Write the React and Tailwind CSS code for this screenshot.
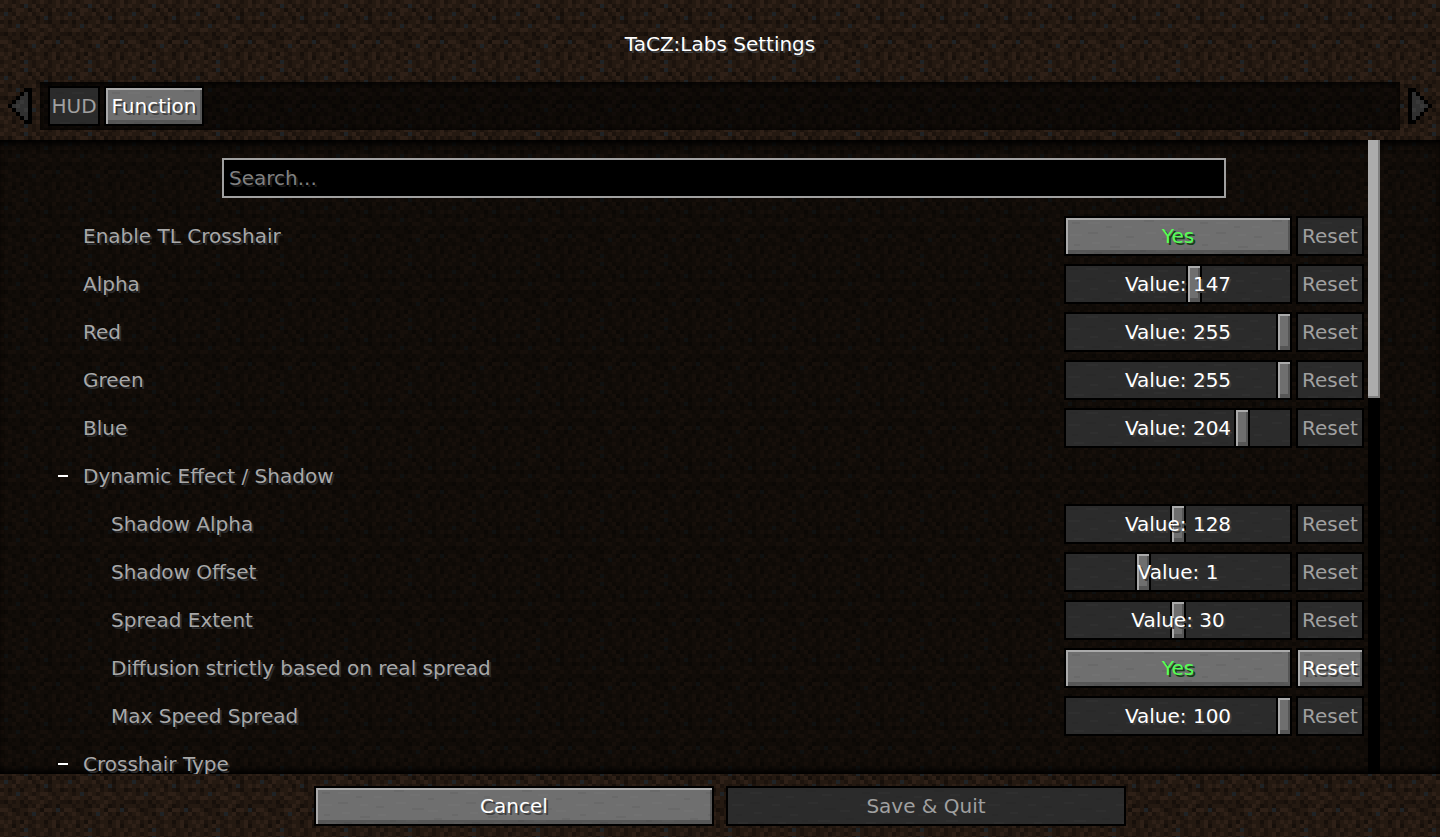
import React, { useId, useState } from "react";

const dirtRows = [
	"MLMDMLLMDMLMDMLD",
	"LMMLMDBMLDMDMMLM",
	"DMKMLLMKMLKMDLDM",
	"MBMDLMMLDMLMKMMD",
	"LMMLDMDMMKMBDMLM",
	"DMKMMKMMLDMDKMMK",
	"LMDMBMLMDMLLMDMM",
	"MMLLMMDLLMDMLMDL",
	"DKMDMKMDMMLMDMMD",
	"MMDMMDKMDLMKDMKM",
	"LLMKDMMLLMKLLMBD",
	"DMLMDMKMBMLDMKML",
	"MDMMLMMDMLMMDMMD",
	"LMLDMKLMDMMKMLDM",
	"MLMKMLMDMLMDMLKM",
	"DMMLMDBMDMMLDMMLD",
];

const dirtColors = {
	L: "#2e2017",
	D: "#1c130d",
	K: "#160f0a",
	B: "#1f2326",
};

const stoneDark = [[6, 4, 8], [40, 8, 6], [78, 2, 10], [112, 10, 6], [22, 14, 10], [60, 18, 8], [96, 20, 12], [8, 26, 6], [44, 28, 10], [118, 30, 8], [74, 32, 6], [28, 34, 8]];
const stoneLight = [[22, 4, 12], [58, 8, 8], [94, 6, 10], [4, 16, 12], [44, 16, 8], [80, 14, 10], [112, 22, 10], [26, 24, 8], [62, 26, 8], [90, 32, 12], [10, 34, 10], [50, 34, 8]];

const settings = [
	{ id: "crosshair", label: "Enable TL Crosshair", type: "toggle" },
	{ id: "alpha", label: "Alpha", type: "slider", value: 147, max: 255 },
	{ id: "red", label: "Red", type: "slider", value: 255, max: 255 },
	{ id: "green", label: "Green", type: "slider", value: 255, max: 255 },
	{ id: "blue", label: "Blue", type: "slider", value: 204, max: 255 },
	{ id: "dynamic", label: "Dynamic Effect / Shadow", type: "group" },
	{ id: "shadowAlpha", label: "Shadow Alpha", type: "slider", value: 128, max: 255, nested: true },
	{ id: "shadowOffset", label: "Shadow Offset", type: "slider", value: 1, max: 3, nested: true },
	{ id: "spread", label: "Spread Extent", type: "slider", value: 30, max: 60, nested: true },
	{ id: "diffusion", label: "Diffusion strictly based on real spread", type: "toggle", changed: true, nested: true },
	{ id: "maxSpeed", label: "Max Speed Spread", type: "slider", value: 100, max: 100, nested: true },
	{ id: "crosshairType", label: "Crosshair Type", type: "group" },
];

// Repeating 16x16 dirt block, 4px per texel
function Dirt({ offset = 0 }) {
	const id = useId();
	return (
		<svg aria-hidden="true" className="absolute inset-0 -z-10 h-full w-full" shapeRendering="crispEdges">
			<defs>
				<pattern id={id} y={offset} width="64" height="64" patternUnits="userSpaceOnUse">
					<rect width="64" height="64" fill="#241911" />
					{dirtRows.map((row, y) =>
						[...row].map((c, x) =>
							dirtColors[c] ? (
								<rect key={`${x}-${y}`} x={x * 4} y={y * 4} width="4" height="4" fill={dirtColors[c]} />
							) : null
						)
					)}
				</pattern>
			</defs>
			<rect width="100%" height="100%" fill={`url(#${id})`} />
		</svg>
	);
}

// Faint grain on the stone buttons
function Stone() {
	const id = useId();
	return (
		<svg aria-hidden="true" className="absolute inset-0 -z-10 h-full w-full" shapeRendering="crispEdges">
			<defs>
				<pattern id={id} width="128" height="40" patternUnits="userSpaceOnUse">
					{stoneDark.map(([x, y, w]) => (
						<rect key={`${x}-${y}`} x={x} y={y} width={w} height="2" fill="#000" opacity="0.05" />
					))}
					{stoneLight.map(([x, y, w]) => (
						<rect key={`${x}-${y}`} x={x} y={y} width={w} height="2" fill="#fff" opacity="0.02" />
					))}
				</pattern>
			</defs>
			<rect width="100%" height="100%" fill={`url(#${id})`} />
		</svg>
	);
}

function StoneButton({ children, disabled, className = "", ...props }) {
	const look = disabled
		? "bg-[#2b2b2b] text-[#a0a0a0]"
		: "bg-[#6f6f6f] text-white shadow-[inset_2px_2px_0_#aaaaaa,inset_-2px_-4px_0_#565656] [text-shadow:2px_2px_0_#3e3e3e]";
	return (
		<button
			type="button"
			disabled={disabled}
			className={`relative isolate flex h-10 shrink-0 items-center justify-center border-2 border-black whitespace-nowrap ${look} ${className}`}
			{...props}
		>
			<Stone />
			{children}
		</button>
	);
}

function Arrow({ flip }) {
	return (
		<button
			type="button"
			aria-label={flip ? "Next tab" : "Previous tab"}
			className="flex w-10 shrink-0 items-center justify-center"
		>
			<svg width="24" height="36" viewBox="0 0 6 9" shapeRendering="crispEdges" className={flip ? "-scale-x-100" : ""}>
				<path d="M4 0H6V9H4V8H3V7H2V6H1V5H0V4H1V3H2V2H3V1H4Z" fill="#000" />
				<path d="M4 1H5V8H4V7H3V6H2V5H1V4H2V3H3V2H4Z" fill="#303030" />
				<path d="M3 3H4V4H3ZM4 5H5V6H4ZM2 4H3V5H2Z" fill="#383838" />
			</svg>
		</button>
	);
}

function Slider({ id, max, value, onChange }) {
	return (
		<div className="relative isolate h-10 w-57 shrink-0 bg-[#2b2b2b]">
			<Stone />
			<input
				id={id}
				type="range"
				min="0"
				max={max}
				value={value}
				onChange={(e) => onChange(Number(e.target.value))}
				className="block h-10 w-full appearance-none bg-transparent shadow-[inset_0_0_0_2px_#000] [&::-webkit-slider-thumb]:h-10 [&::-webkit-slider-thumb]:w-4 [&::-webkit-slider-thumb]:appearance-none [&::-webkit-slider-thumb]:border-2 [&::-webkit-slider-thumb]:border-black [&::-webkit-slider-thumb]:bg-[#6f6f6f] [&::-webkit-slider-thumb]:shadow-[inset_2px_2px_0_#aaaaaa,inset_-2px_-4px_0_#565656]"
			/>
			<output
				htmlFor={id}
				className="pointer-events-none absolute inset-0 text-center leading-10 text-white [text-shadow:2px_2px_0_#3e3e3e]"
			>
				Value: {value}
			</output>
		</div>
	);
}

function SettingRow({ item }) {
	const [value, setValue] = useState(item.type === "toggle" ? true : item.value);

	if (item.type === "group") {
		return (
			<button type="button" aria-expanded="true" className="flex h-10 shrink-0 items-center pl-[58px] text-[#a8a8a8]">
				<span className="mr-[15px] h-[2px] w-[10px] bg-white"></span>
				<span className="[text-shadow:2px_2px_0_#2c2d2f]">{item.label}</span>
			</button>
		);
	}

	return (
		<div className={`flex h-10 shrink-0 items-center gap-1 pr-1 ${item.nested ? "pl-[111px]" : "pl-[83px]"}`}>
			<label htmlFor={item.id} className="flex-1 text-[#a8a8a8] [text-shadow:2px_2px_0_#2c2d2f]">
				{item.label}
			</label>
			{item.type === "toggle" ? (
				<StoneButton id={item.id} className="w-57" onClick={() => setValue(!value)}>
					<span className={value ? "text-[#55ff55] [text-shadow:2px_2px_0_#153f15]" : "text-[#ff5555] [text-shadow:2px_2px_0_#3f1515]"}>
						{value ? "Yes" : "No"}
					</span>
				</StoneButton>
			) : (
				<Slider id={item.id} max={item.max} value={value} onChange={setValue} />
			)}
			<StoneButton className="w-17" disabled={!item.changed}>
				Reset
			</StoneButton>
		</div>
	);
}

function App() {
	const [search, setSearch] = useState("");
	const rows = settings.filter((s) => s.label.toLowerCase().includes(search.toLowerCase()));

	return (
		<div className="relative isolate flex h-screen flex-col overflow-hidden font-['DejaVu_Sans',sans-serif] text-[20px]">
			<Dirt />

			<header className="pt-6 pb-[10px]">
				<h1 className="mb-[18px] h-10 text-center leading-10 text-white [text-shadow:2px_2px_0_#3e4042]">
					TaCZ:Labs Settings
				</h1>
				<nav className="flex h-12">
					<Arrow />
					<div className="flex flex-1 items-center gap-1 bg-black/60 px-2 shadow-[inset_0_3px_3px_rgba(0,0,0,0.5),inset_0_-2px_3px_rgba(0,0,0,0.4)]">
						<StoneButton disabled className="w-13">
							HUD
						</StoneButton>
						<StoneButton className="w-25">Function</StoneButton>
					</div>
					<Arrow flip />
				</nav>
			</header>

			<main className="relative isolate flex min-h-0 flex-1 overflow-hidden">
				<Dirt offset={-138} />
				<div className="absolute inset-0 -z-10 bg-[#010200]/55 shadow-[inset_0_7px_6px_-3px_#000,inset_0_-7px_6px_-3px_#000]"></div>
				<div className="flex min-w-0 flex-1 flex-col gap-2 pt-[18px]">
					<input
						type="text"
						aria-label="Search"
						placeholder="Search..."
						value={search}
						onChange={(e) => setSearch(e.target.value)}
						className="mr-[142px] mb-[10px] ml-[222px] h-10 shrink-0 border-2 border-[#a0a0a0] bg-black px-[5px] text-[#e0e0e0] outline-none [text-shadow:2px_2px_0_#1c1c1c] placeholder:text-[#808080]"
					/>
					{rows.map((item) => (
						<SettingRow key={item.id} item={item} />
					))}
				</div>
				<div className="mr-15 w-3 shrink-0 bg-black">
					<div className="h-[258px] bg-[#acacac] shadow-[inset_-2px_-2px_0_#808080]"></div>
				</div>
			</main>

			<footer className="flex justify-center gap-3 pt-3 pb-[11px]">
				<StoneButton className="w-100">Cancel</StoneButton>
				<StoneButton className="w-100" disabled>
					Save &amp; Quit
				</StoneButton>
			</footer>
		</div>
	);
}

export default App;
